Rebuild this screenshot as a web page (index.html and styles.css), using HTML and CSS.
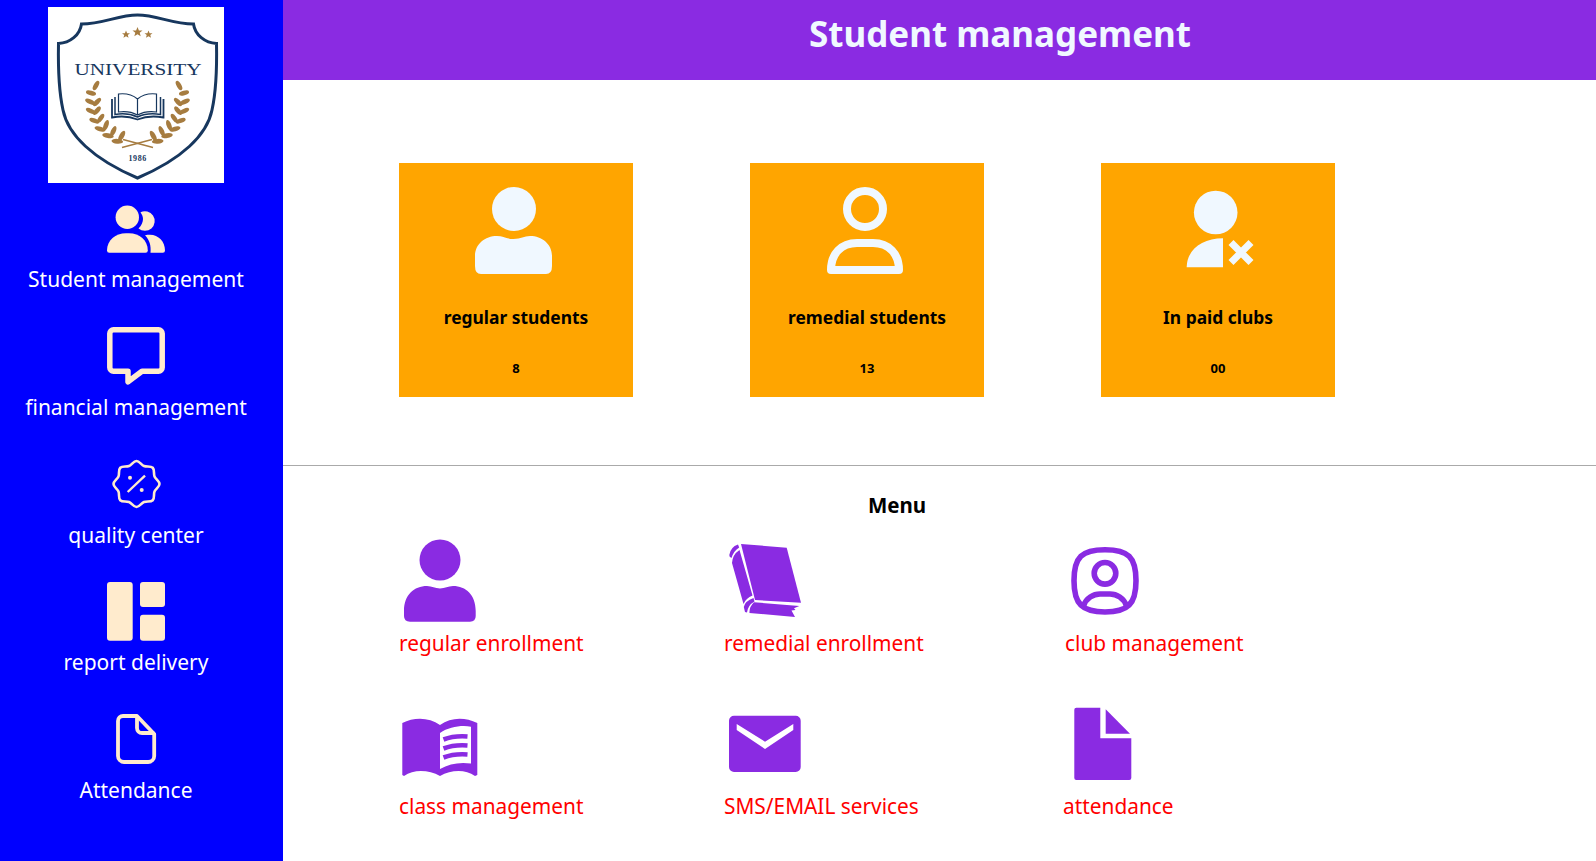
FILE: index.html
```html
<!DOCTYPE html>
<html lang="en">
<head>
<meta charset="utf-8">
<title>Student management</title>
<link rel="stylesheet" href="styles.css">
</head>
<body>
<div class="app">
  <aside class="sidebar">
    <svg class="logo" viewBox="0 0 176 176" role="img" aria-label="University logo">
      <defs>
        <g id="laurel" fill="#a67c40">
          <ellipse cx="48" cy="78.5" rx="5.2" ry="2.3" transform="rotate(-60 48 78.5)"/>
          <ellipse cx="43" cy="86" rx="5.2" ry="2.3" transform="rotate(15 43 86)"/>
          <ellipse cx="49" cy="95" rx="5.2" ry="2.3" transform="rotate(-45 49 95)"/>
          <ellipse cx="42" cy="94.7" rx="5.2" ry="2.3" transform="rotate(25 42 94.7)"/>
          <ellipse cx="49" cy="103.7" rx="5.2" ry="2.3" transform="rotate(-50 49 103.7)"/>
          <ellipse cx="42.7" cy="104" rx="5.2" ry="2.3" transform="rotate(25 42.7 104)"/>
          <ellipse cx="52.7" cy="111.3" rx="5.2" ry="2.3" transform="rotate(-55 52.7 111.3)"/>
          <ellipse cx="46.3" cy="113.7" rx="5.2" ry="2.3" transform="rotate(20 46.3 113.7)"/>
          <ellipse cx="58" cy="118.3" rx="5.6" ry="2.4" transform="rotate(-70 58 118.3)"/>
          <ellipse cx="52" cy="122" rx="5.6" ry="2.4" transform="rotate(15 52 122)"/>
          <ellipse cx="65.3" cy="124.3" rx="5.6" ry="2.4" transform="rotate(-65 65.3 124.3)"/>
          <ellipse cx="60" cy="128.7" rx="5.8" ry="2.4" transform="rotate(10 60 128.7)"/>
          <ellipse cx="73.7" cy="129" rx="5.8" ry="2.4" transform="rotate(-60 73.7 129)"/>
          <ellipse cx="69.3" cy="134.3" rx="5.8" ry="2.4" transform="rotate(5 69.3 134.3)"/>
          <path d="M75 132.5 L105 140.5" stroke="#a67c40" stroke-width="1.4"/>
        </g>
        <path id="star" d="M0-5 1.4-1.6 5-1.5 2.2.7 3.2 4.2 0 2.2-3.2 4.2-2.2.7-5-1.5-1.4-1.6Z" fill="#a67c40"/>
      </defs>
      <rect width="176" height="176" fill="#fff"/>
      <path d="M89.5 8 C70 8 55 17 33.5 17 C32 28 22 36 10.5 36.5 C10 62 11 85 15 103 C20 128 45 152 89.5 171 C134 152 159 128 164 103 C168 85 169 62 168.5 36.5 C157 36 147 28 145.5 17 C124 17 109 8 89.5 8Z" fill="none" stroke="#17375e" stroke-width="3"/>
      <use href="#star" x="89.5" y="25"/>
      <use href="#star" x="78" y="27.5" transform="translate(15.6 5.5) scale(.8)"/>
      <use href="#star" x="100.5" y="27.5" transform="translate(20.1 5.5) scale(.8)"/>
      <text class="logo-name" x="26.5" y="68" textLength="127" lengthAdjust="spacingAndGlyphs">UNIVERSITY</text>
      <use href="#laurel"/>
      <use href="#laurel" transform="translate(179 0) scale(-1 1)"/>
      <path d="M64 92 V110.5 C74 108.5 82 109.5 89.5 112.5 C97 109.5 105 108.5 115.5 110.5 V92" fill="none" stroke="#17375e" stroke-width="1.8"/>
      <path d="M67 90 V107.5 C76 106 83 107 89.5 110 C96 107 103 106 112.5 107.5 V90" fill="none" stroke="#17375e" stroke-width="1.5"/>
      <path d="M89.5 92 C84 87.5 77 86.2 70.5 87 V105 C77 104 84 105 89.5 108 C95 105 102 104 108.5 105 V87 C102 86.2 95 87.5 89.5 92 V108" fill="#fff" stroke="#17375e" stroke-width="1.2"/>
      <text class="logo-year" x="89.7" y="154" text-anchor="middle">1986</text>
    </svg>

    <nav class="nav">
      <a class="nav-item">
        <svg class="nav-icon fill" viewBox="0 0 64 64">
          <circle cx="23.3" cy="21.3" r="11.7"/>
          <path d="M36.5 16.3 A9.8 9.8 0 1 1 34.5 32.5 C37.5 29.5 39 26 39 23 C39 20.8 38 18.5 36.5 16.3Z"/>
          <path d="M3 54.5 C3 44.5 11.5 37.3 22 37.3 H25 C35.5 37.3 43.8 44.5 43.8 54.5 Q43.8 56.8 41.5 56.8 H5.3 Q3 56.8 3 54.5Z"/>
          <path d="M41 39.2 C43 38.8 44 38.7 46 38.7 C54.5 38.7 61 45.5 61 54.5 Q61 56.8 58.8 56.8 H46.5 C47.3 49.5 45.5 44 41 39.2Z"/>
        </svg>
        <span class="nav-label">Student management</span>
      </a>
      <a class="nav-item">
        <svg class="nav-icon line" viewBox="0 0 64 64" stroke-width="5.5">
          <path d="M9.5 5.8 H54.5 a3.7 3.7 0 0 1 3.7 3.7 V43.5 a3.7 3.7 0 0 1-3.7 3.7 H38 L24 57.8 V47.2 H9.5 a3.7 3.7 0 0 1-3.7-3.7 V9.5 a3.7 3.7 0 0 1 3.7-3.7Z"/>
        </svg>
        <span class="nav-label">financial management</span>
      </a>
      <a class="nav-item">
        <svg class="nav-icon line" viewBox="0 0 64 64" stroke-width="2.6">
          <path d="M55.5 32 C55.5 35 51.67 36.69 50.52 39.46 S50.88 46.14 48.76 48.26 S42.73 48.87 39.96 50.02 S35.5 55 32.5 55 S27.81 51.17 25.04 50.02 S18.36 50.38 16.24 48.26 S15.63 42.23 14.48 39.46 S9.5 35 9.5 32 S13.33 27.31 14.48 24.54 S14.12 17.86 16.24 15.74 S22.27 15.13 25.04 13.98 S29.5 9 32.5 9 S37.19 12.83 39.96 13.98 S46.64 13.62 48.76 15.74 S49.37 21.77 50.52 24.54 S55.5 29 55.5 32Z"/>
          <path d="M41 23.7 L23.7 40" stroke-width="2.4"/>
          <circle class="dot" cx="26" cy="25.7" r="2"/>
          <circle class="dot" cx="37.7" cy="38" r="2"/>
        </svg>
        <span class="nav-label">quality center</span>
      </a>
      <a class="nav-item">
        <svg class="nav-icon fill" viewBox="0 -1 64 64">
          <rect x="3" y="2" width="25.7" height="58.7" rx="3"/>
          <rect x="36" y="2" width="25" height="25" rx="3"/>
          <rect x="36" y="34.7" width="25" height="26" rx="3"/>
        </svg>
        <span class="nav-label">report delivery</span>
      </a>
      <a class="nav-item">
        <svg class="nav-icon line" viewBox="0 -1 64 64" stroke-width="3.8">
          <path d="M19 8 H33 L50.2 26 V48 a6 6 0 0 1-6 6 H20 a6 6 0 0 1-6-6 V13 a5 5 0 0 1 5-5Z"/>
          <path d="M33 8 V20 a5 5 0 0 0 5 5 H50.2"/>
        </svg>
        <span class="nav-label">Attendance</span>
      </a>
    </nav>
  </aside>

  <main class="main">
    <header class="topbar"><h1 class="title">Student management</h1></header>

    <section class="stats">
      <div class="card">
        <svg class="card-icon" viewBox="0 0 96 96">
          <circle cx="46" cy="27" r="22"/>
          <path d="M7 84 V74 C7 62 17 54 29 54 C35 54 38 57 45.5 57 C53 57 56 54 62 54 C74 54 84 62 84 74 V84 Q84 92 78 92 H13 Q7 92 7 84Z"/>
        </svg>
        <div class="card-title">regular students</div>
        <div class="card-count">8</div>
      </div>
      <div class="card">
        <svg class="card-icon outline" viewBox="0 0 96 96">
          <circle cx="46" cy="27" r="18"/>
          <path d="M12 88 C12 72 22 61 38 61 H54 C70 61 80 72 80 88Z"/>
        </svg>
        <div class="card-title">remedial students</div>
        <div class="card-count">13</div>
      </div>
      <div class="card">
        <svg class="card-icon" viewBox="0 0 96 96">
          <circle cx="45.7" cy="30.5" r="21.8"/>
          <path d="M53 56.3 V85.3 H16.7 C16.7 68 32 56.3 53 56.3Z"/>
          <path class="cross" d="M61 60.5 L81 80.5 M81 60.5 L61 80.5"/>
        </svg>
        <div class="card-title">In paid clubs</div>
        <div class="card-count">00</div>
      </div>
    </section>

    <hr class="rule">

    <section class="menu">
      <h2 class="menu-title">Menu</h2>
      <div class="menu-grid">
        <a class="menu-item">
          <svg class="menu-icon" viewBox="0 0 90 90">
            <circle cx="41" cy="25" r="20.5"/>
            <path d="M5 76 C5 60 15 51 28 51 C33 51 36 53.5 41 53.5 C46 53.5 49 51 54 51 C67 51 76.7 60 76.7 76 V81 Q76.7 86.7 71 86.7 H11 Q5 86.7 5 81Z"/>
          </svg>
          <span class="menu-label">regular enrollment</span>
        </a>
        <a class="menu-item">
          <svg class="menu-icon" viewBox="0 0 90 90">
            <path d="M17 9 L62.7 12.7 L77 67.7 L31 65Z"/>
            <path d="M14 9.5 L15.2 12.5 Q9.5 16 7.5 23 Q5 22 5.3 20 Q6.5 12 14 9.5Z"/>
            <path d="M15.5 15 L28.5 60.5 Q22 63 19.5 69 L8 28 Q8.5 19.5 15.5 15Z"/>
            <path d="M29.5 63 Q21 66 19.8 72 L21 77 L23 77.5 Q24 70 30.5 66.5Z"/>
            <path d="M30 67.3 L75.3 71 L70 73.3 L71.5 75 L67.5 75.5 L71 82 L25.5 78 Q25 72 30 67.3Z"/>
          </svg>
          <span class="menu-label">remedial enrollment</span>
        </a>
        <a class="menu-item club">
          <svg class="menu-icon outline" viewBox="0 0 90 90">
            <path d="M42 14.7 C65 14.7 73 22 73 45.7 C73 69 65 77 42 77 C19 77 11 69 11 45.7 C11 22 19 14.7 42 14.7Z"/>
            <circle cx="42" cy="38.3" r="10.8"/>
            <path d="M20.5 71 C23 63 30.5 59 37 59 H47 C53.5 59 61 63 63.5 71"/>
          </svg>
          <span class="menu-label">club management</span>
        </a>
        <a class="menu-item">
          <svg class="menu-icon" viewBox="0 0 90 90">
            <path fill-rule="evenodd" d="M3.3 25 C15 19 30 19 41 27 C52 19 66 19 78.3 25 V77 L76 78 C66 71 52 72 41 78 C30 72 15 71 5 78 L3.3 77Z M41 35 V71 C50 66 60 64 72 65.6 V28.7 C62 27 50 29 41 35Z"/>
            <path class="page-line" d="M44.5 41.5 Q55 37.5 68.5 38.5 M44.5 50.5 Q55 46.5 68.5 47.5 M44.5 59.5 Q55 55.5 68.5 56.5"/>
          </svg>
          <span class="menu-label">class management</span>
        </a>
        <a class="menu-item">
          <svg class="menu-icon" viewBox="0 0 90 90">
            <path fill-rule="evenodd" d="M10 17.7 H71.7 a5 5 0 0 1 5 5 V69 a5 5 0 0 1-5 5 H10 a5 5 0 0 1-5-5 V22.7 a5 5 0 0 1 5-5Z M12.7 26 V32 L41 51 L69.3 32 V26 L41 43.7Z"/>
          </svg>
          <span class="menu-label">SMS/EMAIL services</span>
        </a>
        <a class="menu-item">
          <svg class="menu-icon" viewBox="0 0 90 90">
            <path d="M13.3 9.7 H37.3 V40.3 H68.3 V80 a2 2 0 0 1-2 2 H13.3 a2 2 0 0 1-2-2 V11.7 a2 2 0 0 1 2-2Z"/>
            <path d="M42.7 11.3 L67 35.7 H42.7Z"/>
          </svg>
          <span class="menu-label">attendance</span>
        </a>
      </div>
    </section>
  </main>
</div>
</body>
</html>
```

FILE: styles.css
```css
* { box-sizing: border-box; }

html, body {
  margin: 0;
  height: 100%;
  overflow: hidden;
}

body {
  font-family: "Noto Sans", "Open Sans", sans-serif;
  background: #fff;
  color: #000;
}

.app {
  display: flex;
  height: 861px;
}

/* Sidebar */
.sidebar {
  flex: 0 0 283px;
  display: flex;
  flex-direction: column;
  align-items: center;
  padding: 7px 11px 0 0;
  background: #0000ff;
}

.logo {
  display: block;
  width: 176px;
  height: 176px;
  flex: none;
}

.logo-name {
  font-family: "Liberation Serif", serif;
  font-size: 17px;
  fill: #17375e;
}

.logo-year {
  font-family: "Liberation Serif", serif;
  font-size: 8px;
  font-weight: 700;
  letter-spacing: .6px;
  fill: #17375e;
}

.nav {
  display: flex;
  flex-direction: column;
  align-items: center;
  margin-top: 13px;
}

.nav-item {
  display: flex;
  flex-direction: column;
  align-items: center;
  height: 127.75px;
  color: #fff;
}

.nav-icon {
  display: block;
  width: 64px;
  height: 64px;
  flex: none;
}

.nav-icon.fill { fill: #ffebcd; }

.nav-icon.line {
  fill: none;
  stroke: #ffebcd;
  stroke-linejoin: round;
}

.nav-icon .dot {
  fill: #ffebcd;
  stroke: none;
}

.nav-label {
  margin-top: 5px;
  font-size: 21px;
  line-height: 28px;
  white-space: nowrap;
}

/* Main */
.main {
  flex: 1;
  min-width: 0;
}

.topbar {
  height: 80px;
  padding-left: 121px;
  background: #8a2be2;
  display: flex;
  align-items: center;
  justify-content: center;
}

.title {
  margin: 0 0 12px;
  font-size: 35px;
  line-height: 50px;
  font-weight: 700;
  color: #f0f8ff;
}

.stats {
  display: flex;
  gap: 117px;
  height: 385px;
  padding: 83px 0 0 116px;
}

.card {
  width: 234px;
  height: 234px;
  padding-top: 19px;
  display: flex;
  flex-direction: column;
  align-items: center;
  background: #ffa500;
}

.card-icon {
  display: block;
  width: 96px;
  height: 96px;
  flex: none;
  fill: #f0f8ff;
}

.card-icon.outline {
  fill: none;
  stroke: #f0f8ff;
  stroke-width: 8;
  stroke-linejoin: round;
}

.cross {
  fill: none;
  stroke: #f0f8ff;
  stroke-width: 7;
}

.card-title {
  margin-top: 27px;
  font-size: 17.4px;
  line-height: 24px;
  font-weight: 700;
}

.card-count {
  margin-top: 30px;
  font-size: 13px;
  line-height: 18px;
  font-weight: 700;
}

.rule {
  margin: 0;
  border: 0;
  border-top: 1px solid #aaa;
}

.menu {
  margin-left: 116px;
  width: 996px;
}

.menu-title {
  margin: 24px 0 0;
  font-size: 20.5px;
  line-height: 30px;
  font-weight: 700;
  text-align: center;
}

.menu-grid {
  display: grid;
  grid-template-columns: 325px 339px 1fr;
  row-gap: 42px;
  margin-top: 15px;
}

.menu-item {
  display: flex;
  flex-direction: column;
  align-items: flex-start;
  color: #ff0000;
}

.menu-item.club .menu-label { margin-left: 2px; }

.menu-icon {
  display: block;
  width: 90px;
  height: 90px;
  flex: none;
  fill: #8a2be2;
}

.menu-icon.outline {
  fill: none;
  stroke: #8a2be2;
  stroke-width: 5.6;
}

.page-line {
  fill: none;
  stroke: #8a2be2;
  stroke-width: 4.6;
}

.menu-label {
  margin-top: 5px;
  font-size: 20.85px;
  line-height: 26px;
  white-space: nowrap;
}
```
